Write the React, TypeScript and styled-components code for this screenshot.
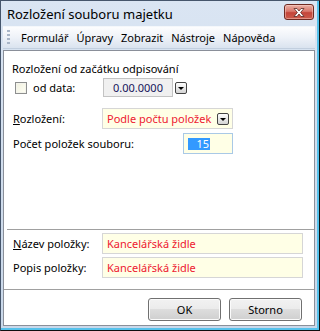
import * as React from 'react';
import styled, { createGlobalStyle } from 'styled-components';

const GlobalStyle = createGlobalStyle`
    html, body {
        margin: 0;
        padding: 0;
        background: #ffffff;
    }
    body {
        font-family: "Noto Sans", "Liberation Sans", sans-serif;
    }
`;

const StyledWindow = styled.div`
    width: 320px;
    height: 331px;
    box-sizing: border-box;
    display: flex;
    flex-direction: column;
    padding: 0 4px 4px 2px;
    border: 1px solid #46566c;
    border-right-color: #101010;
    border-bottom-color: #101010;
    background: linear-gradient(#dae5f3, #cfdcec 60%, #c9d8ea);
    box-shadow: inset -2px -2px 0 #56c2ec;
`;

const StyledTitleBar = styled.div`
    height: 25px;
    flex-shrink: 0;
    display: flex;
    align-items: flex-start;
    justify-content: space-between;
    padding: 3px 1px 0 4px;
    box-sizing: border-box;
`;

const StyledTitle = styled.span`
    font-size: 13px;
    line-height: 20px;
    color: #000000;
`;

const StyledCloseButton = styled.div`
    width: 30px;
    height: 16px;
    box-sizing: border-box;
    border: 1px solid #6e2a22;
    border-radius: 3px;
    background: linear-gradient(#eab0a6, #d9786c 45%, #c4453a 55%, #cc5b4c);
    box-shadow: inset 0 0 0 1px rgba(255, 220, 210, 0.45);
    display: flex;
    align-items: center;
    justify-content: center;
`;

const StyledMenuBar = styled.div`
    height: 23px;
    flex-shrink: 0;
    display: flex;
    align-items: center;
    box-sizing: border-box;
    border-top: 1px solid #f4f7fb;
    border-bottom: 1px solid #c2cfdf;
    background: linear-gradient(#fdfdfe, #eef2f8 50%, #dae3ef);
    padding-left: 4px;
`;

const StyledGrip = styled.div`
    width: 3px;
    height: 15px;
    margin-right: 7px;
    background: repeating-linear-gradient(#a9b6c8 0 2px, transparent 2px 4px);
`;

const StyledMenuItem = styled.span`
    font-size: 11px;
    line-height: 16px;
    padding: 0 4px;
    color: #000000;
`;

const StyledContent = styled.div`
    flex: 1;
    margin-top: 1px;
    display: flex;
    flex-direction: column;
    background: #ffffff;
    border: 1px solid #8a8f99;
`;

const StyledUpper = styled.div`
    padding: 10px 0 0 9px;
    display: flex;
    flex-direction: column;
`;

const StyledHeading = styled.div`
    font-size: 11px;
    line-height: 15px;
    margin-left: -1px;
    color: #000000;
`;

const StyledRow = styled.div<{ $top: number; $height: number }>`
    display: flex;
    align-items: center;
    margin-top: ${p => p.$top}px;
    height: ${p => p.$height}px;
`;

const StyledLabel = styled.label<{ $width?: number }>`
    width: ${p => p.$width ?? 89}px;
    flex-shrink: 0;
    font-size: 11px;
    line-height: 15px;
    color: #000000;
`;

const StyledCheckbox = styled.span`
    width: 12px;
    height: 12px;
    margin: 0 6px 0 2px;
    box-sizing: border-box;
    border: 1px solid #8e8f8f;
    background: linear-gradient(135deg, #f0f0e0, #fffff4);
    box-shadow: inset 0 0 0 1px #f4f4ec;
`;

const StyledDateField = styled.div`
    width: 70px;
    height: 19px;
    margin-left: 1px;
    box-sizing: border-box;
    border: 1px solid #c3c3c3;
    background: #f0f0f0;
    display: flex;
    align-items: center;
    justify-content: center;
    font-size: 11px;
    color: #14145a;
`;

const StyledDropButton = styled.span<{ $left?: number }>`
    width: 12px;
    height: 12px;
    margin-left: ${p => p.$left ?? 0}px;
    box-sizing: border-box;
    border: 1px solid #444444;
    border-radius: 2px;
    background: linear-gradient(#fdfdfd, #d4d4d4);
    display: flex;
    align-items: center;
    justify-content: center;
    flex-shrink: 0;

    &::after {
        content: '';
        border-left: 3px solid transparent;
        border-right: 3px solid transparent;
        border-top: 3px solid #000000;
        margin-top: 1px;
    }
`;

const StyledInput = styled.div<{ $width: number; $focused?: boolean }>`
    width: ${p => p.$width}px;
    height: 21px;
    box-sizing: border-box;
    border: 1px solid ${p => (p.$focused ? '#a9c9e6' : '#d6d6d6')};
    background: #ffffe6;
    display: flex;
    align-items: center;
    padding: 0 3px 0 4px;
    font-size: 11px;
    color: #ee1830;
`;

const StyledInputText = styled.span`
    flex: 1;
    white-space: nowrap;
`;

const StyledSelection = styled.span`
    width: 22px;
    height: 12px;
    line-height: 12px;
    text-align: right;
    padding-right: 1px;
    box-sizing: border-box;
    background: #3399ff;
    color: #ffffff;
`;

const StyledSpacer = styled.div`
    flex: 1;
`;

const StyledSeparator = styled.div<{ $inset?: number; $top?: number }>`
    height: 1px;
    margin-left: ${p => p.$inset ?? 0}px;
    margin-top: ${p => p.$top ?? 0}px;
    background: #a0a0a0;
`;

const StyledLower = styled.div`
    padding-left: 9px;
    display: flex;
    flex-direction: column;
`;

const StyledButtonRow = styled.div`
    display: flex;
    justify-content: flex-end;
    gap: 8px;
    margin: 8px 0 4px;
    padding-right: 12px;
`;

const StyledButton = styled.button`
    width: 73px;
    height: 23px;
    padding: 0;
    border: 1px solid #707070;
    border-radius: 3px;
    background: linear-gradient(#f2f2f2, #ebebeb 50%, #dddddd 50%, #cfcfcf);
    box-shadow: inset 0 0 0 1px #fbfbfb;
    font-family: "Noto Sans", "Liberation Sans", sans-serif;
    font-size: 11px;
    color: #000000;
`;

const CloseGlyph: React.FunctionComponent = () => (
    <svg width="14" height="11" viewBox="0 0 14 11">
        <path
            d="M2 1.5 H5 L7 4 L9 1.5 H12 L8.6 5.5 L12 9.5 H9 L7 7 L5 9.5 H2 L5.4 5.5 Z"
            fill="#ffffff"
            stroke="#5a2a25"
            strokeWidth="0.8"
            strokeLinejoin="round"
        />
    </svg>
);

const menuItems = ['Formulář', 'Úpravy', 'Zobrazit', 'Nástroje', 'Nápověda'];

const App: React.FunctionComponent = () => {
    return (
        <>
            <GlobalStyle />
            <StyledWindow>
                <StyledTitleBar>
                    <StyledTitle>Rozložení souboru majetku</StyledTitle>
                    <StyledCloseButton><CloseGlyph /></StyledCloseButton>
                </StyledTitleBar>
                <StyledMenuBar>
                    <StyledGrip />
                    {menuItems.map(item => <StyledMenuItem key={item}>{item}</StyledMenuItem>)}
                </StyledMenuBar>
                <StyledContent>
                    <StyledUpper>
                        <StyledHeading>Rozložení od začátku odpisování</StyledHeading>
                        <StyledRow $top={2} $height={19}>
                            <StyledCheckbox />
                            <StyledLabel $width={69}>od data:</StyledLabel>
                            <StyledDateField>0.00.0000</StyledDateField>
                            <StyledDropButton $left={2} />
                        </StyledRow>
                        <StyledRow $top={11} $height={21}>
                            <StyledLabel><u>R</u>ozložení:</StyledLabel>
                            <StyledInput $width={131}>
                                <StyledInputText>Podle počtu položek</StyledInputText>
                                <StyledDropButton />
                            </StyledInput>
                        </StyledRow>
                        <StyledRow $top={4} $height={21}>
                            <StyledLabel $width={170}>Počet položek souboru:</StyledLabel>
                            <StyledInput $width={50} $focused>
                                <StyledSelection>15</StyledSelection>
                            </StyledInput>
                        </StyledRow>
                    </StyledUpper>
                    <StyledSpacer />
                    <StyledSeparator $inset={3} />
                    <StyledLower>
                        <StyledRow $top={3} $height={21}>
                            <StyledLabel><u>N</u>ázev položky:</StyledLabel>
                            <StyledInput $width={201}>
                                <StyledInputText>Kancelářská židle</StyledInputText>
                            </StyledInput>
                        </StyledRow>
                        <StyledRow $top={3} $height={21}>
                            <StyledLabel>Popis položky:</StyledLabel>
                            <StyledInput $width={201}>
                                <StyledInputText>Kancelářská židle</StyledInputText>
                            </StyledInput>
                        </StyledRow>
                    </StyledLower>
                    <StyledSeparator $top={11} />
                    <StyledButtonRow>
                        <StyledButton>OK</StyledButton>
                        <StyledButton>Storno</StyledButton>
                    </StyledButtonRow>
                </StyledContent>
            </StyledWindow>
        </>
    );
};

export default App;
